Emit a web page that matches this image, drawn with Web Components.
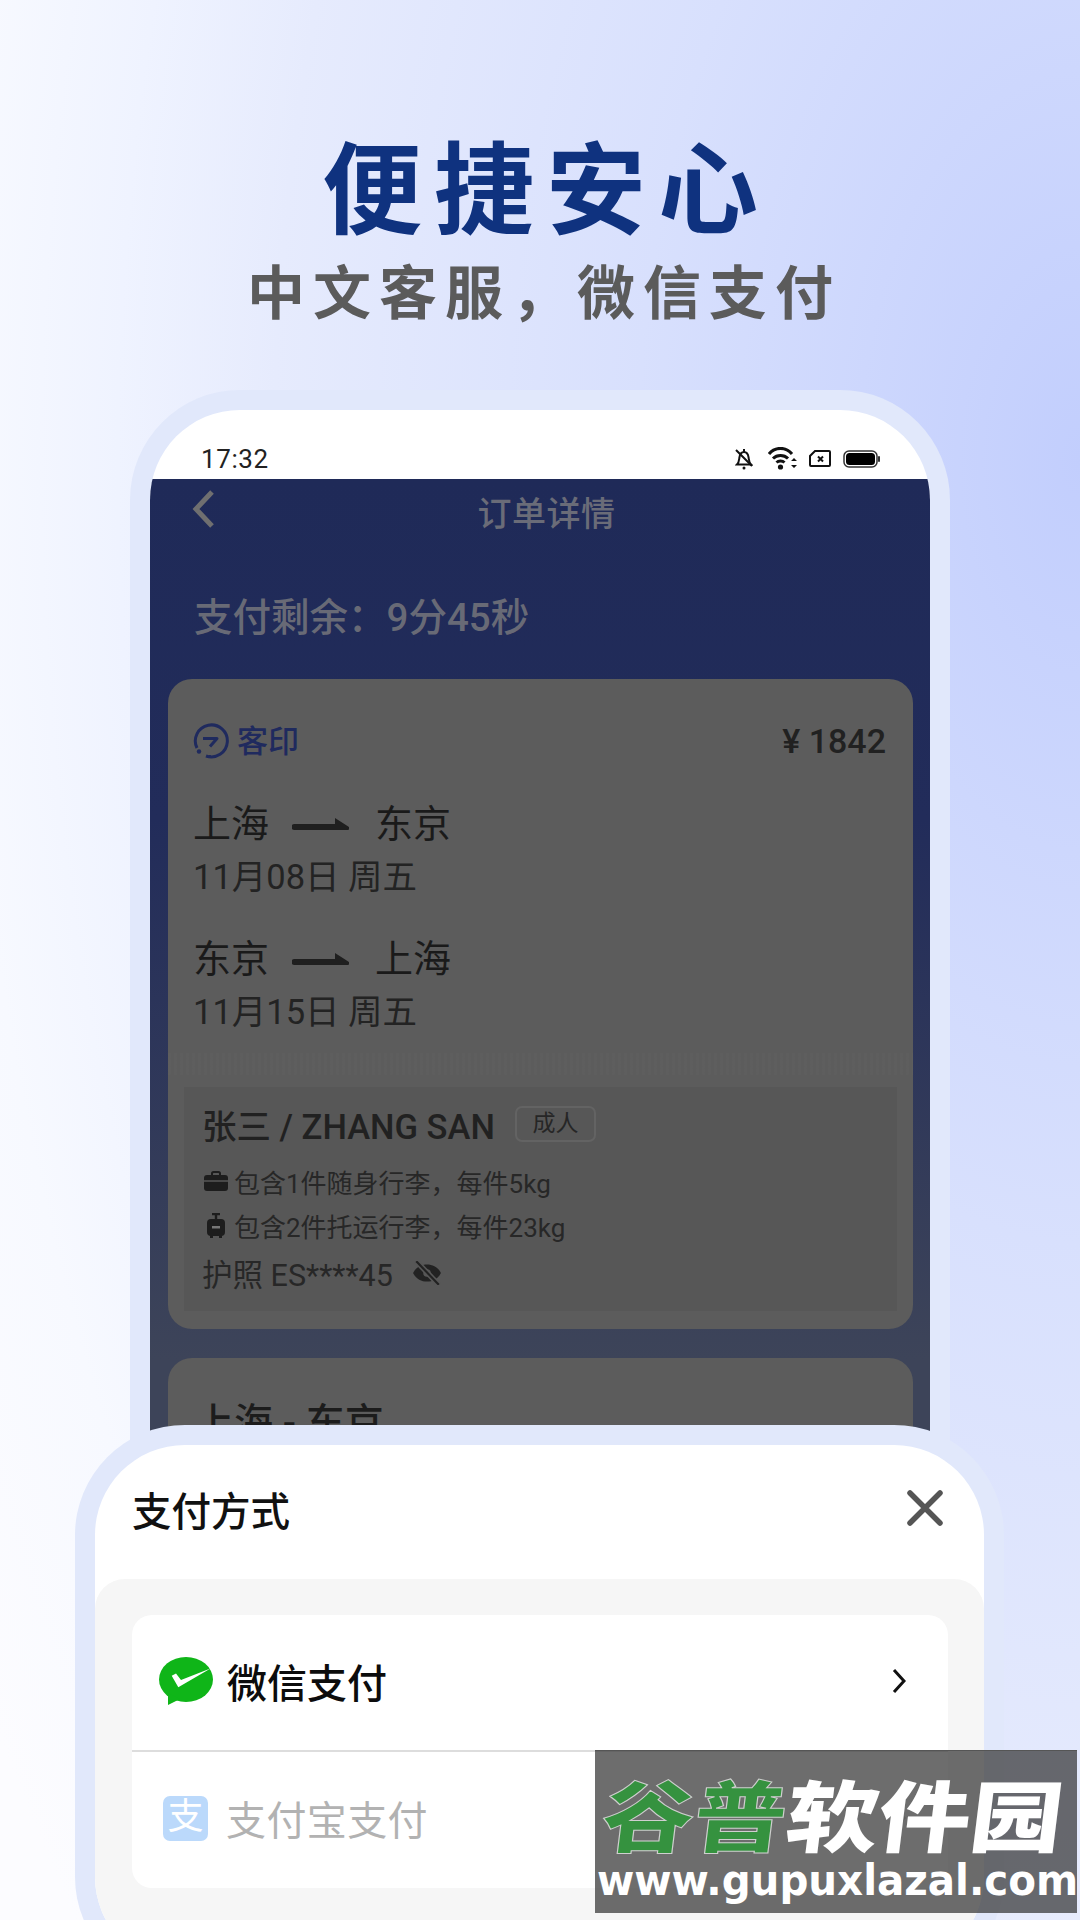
<!DOCTYPE html>
<html lang="zh-CN">
<head>
<meta charset="UTF-8">
<title>便捷安心</title>
<style>
  html, body { margin: 0; padding: 0; }
  body {
    position: relative;
    width: 1080px;
    height: 1920px;
    overflow: hidden;
    font-family: Roboto, "Noto Sans CJK SC", sans-serif;
    background:
      radial-gradient(1300px 2300px at 100% 24%, #c2cefd 0, #d8e0fd 34%, #e6ebfd 62%, #eff3ff 74%, #f7f9ff 86%, #fcfcff 100%);
  }
</style>
</head>
<body>
  <promo-heading>
    <span slot="title">便捷安心</span>
    <span slot="sub">中文客服，微信支付</span>
  </promo-heading>

  <phone-frame>
    <status-bar time="17:32"></status-bar>
    <order-page>
      <order-header>订单详情</order-header>
      <count-down>支付剩余：9分45秒</count-down>

      <order-card>
        <brand-row price="¥ 1842">客印</brand-row>
        <route-row from="上海" to="东京" date="11月08日 周五"></route-row>
        <route-row from="东京" to="上海" date="11月15日 周五" class="second"></route-row>
        <passenger-box>
          <span slot="name">张三 / ZHANG SAN</span>
          <span slot="tag">成人</span>
          <bag-line kind="bag">包含1件随身行李，每件5kg</bag-line>
          <bag-line kind="case">包含2件托运行李，每件23kg</bag-line>
          <span slot="passport">护照 ES****45</span>
        </passenger-box>
      </order-card>

      <next-card>上海 - 东京</next-card>
    </order-page>
  </phone-frame>

  <pay-sheet>
    <pay-row kind="wechat">微信支付</pay-row>
    <pay-row kind="alipay" disabled>支付宝支付</pay-row>
  </pay-sheet>

  <water-mark></water-mark>

<script>
  // 小工具：定义一个只有 shadow DOM 的元素
  function shadow(el, html) {
    el.attachShadow({ mode: 'open' }).innerHTML = html;
  }

  class PromoHeading extends HTMLElement {
    constructor() {
      super();
      shadow(this, `
        <style>
          :host { display: flex; flex-direction: column; align-items: center; box-sizing: border-box; padding-top: 120px; height: 390px; }
          .t { font: 700 100px/126px "Noto Sans CJK SC", sans-serif; letter-spacing: 12px; color: #0f327f; margin-right: -12px; }
          .s { font: 700 58px/76px "Noto Sans CJK SC", sans-serif; letter-spacing: 8px; color: #5b5b5b; margin-top: 5px; margin-right: -8px; }
        </style>
        <div class="t"><slot name="title"></slot></div>
        <div class="s"><slot name="sub"></slot></div>`);
    }
  }

  class PhoneFrame extends HTMLElement {
    constructor() {
      super();
      shadow(this, `
        <style>
          :host { display: block; box-sizing: border-box; width: 820px; height: 1100px; margin-left: 130px; padding: 20px 20px 0; background: #e1e8fb; border-radius: 110px 110px 0 0; }
          .in { height: 100%; background: #fff; border-radius: 90px 90px 0 0; overflow: hidden; }
        </style>
        <div class="in"><slot></slot></div>`);
    }
  }

  class StatusBar extends HTMLElement {
    constructor() {
      super();
      shadow(this, `
        <style>
          :host { display: flex; align-items: center; height: 69px; box-sizing: border-box; padding: 28px 50px 0 51px; color: #222; }
          .time { font: 400 26px/30px Roboto, sans-serif; letter-spacing: .6px; flex: 1; }
          svg { display: block; margin-left: 13px; }
        </style>
        <span class="time">${this.getAttribute('time')}</span>
        <svg width="18" height="22" viewBox="0 0 18 22" fill="none" stroke="#111" stroke-width="2">
          <path d="M2 16.500c2-2 2-4 2.400-7C5 5.500 7 4 9 4s4 1.500 4.600 5.500c.4 3 .4 5 2.400 7z"/>
          <path d="M9 1v3M1 2l16 16"/><circle cx="9" cy="20" r="1.500" fill="#111" stroke="none"/>
        </svg>
        <svg style="margin-left:15px" width="30" height="23" viewBox="0 0 30 23" fill="none" stroke="#111" stroke-width="3">
          <path d="M1 7C7-.5 18-.5 24 7M5 11.500c4-4 11-4 15 0M8.500 15.500c2-2 6-2 8 0"/>
          <circle cx="12.500" cy="20" r="2.600" fill="#111" stroke="none"/>
          <path d="M26 11l3 3h-6zM26 21l3-3h-6z" fill="#111" stroke="none"/>
        </svg>
        <svg style="margin-left:11px" width="22" height="17" viewBox="0 0 22 17" fill="none" stroke="#111" stroke-width="2">
          <path d="M6 1h14a1 1 0 0 1 1 1v13a1 1 0 0 1-1 1H2a1 1 0 0 1-1-1V6z"/>
          <path d="M9 6.500l5 5M14 6.500l-5 5" stroke-width="2"/>
        </svg>
        <svg style="margin-left:12px" width="37" height="18" viewBox="0 0 37 18">
          <rect x="1" y="1" width="33" height="16" rx="5" fill="none" stroke="#333" stroke-width="1.500"/>
          <rect x="3" y="3" width="29" height="12" rx="3.500" fill="#000"/>
          <rect x="35" y="6" width="2" height="6" rx="1" fill="#333"/>
        </svg>`);
    }
  }

  class OrderPage extends HTMLElement {
    constructor() {
      super();
      shadow(this, `
        <style>
          :host { display: block; height: 1100px; box-sizing: border-box; padding: 0 17px 0 18px; background: linear-gradient(#1f2a58 0, #222c5a 340px, #3d4459 880px); }
        </style>
        <slot></slot>`);
    }
  }

  class OrderHeader extends HTMLElement {
    constructor() {
      super();
      shadow(this, `
        <style>
          :host { display: grid; grid-template-columns: 1fr auto 1fr; align-items: center; height: 66px; padding-left: 12px; color: #6a6c78; font-size: 34px; font-weight: 500; }
          svg { display: block; margin-left: 12px; margin-top: -6px; }
          .t { margin-top: -1px; letter-spacing: .5px; }
        </style>
        <svg width="24" height="38" viewBox="0 0 24 38" fill="none" stroke="#6f6f70" stroke-width="5"><path d="M20 2L4 19l16 17"/></svg>
        <div class="t"><slot></slot></div>
        <div></div>`);
    }
  }

  class CountDown extends HTMLElement {
    constructor() {
      super();
      shadow(this, `
        <style>
          :host { display: block; margin: 48px 0 36px; padding-left: 26px; font-size: 38.500px; line-height: 50px; font-weight: 500; color: #686a76; }
        </style>
        <slot></slot>`);
    }
  }

  class OrderCard extends HTMLElement {
    constructor() {
      super();
      shadow(this, `
        <style>
          :host { display: block; box-sizing: border-box; height: 650px; padding: 40px 16px 17px; background: #5c5c5c; border-radius: 24px; color: #222; }
          ::slotted(.second) { margin-top: 32px; }
        </style>
        <slot></slot>`);
    }
  }

  class BrandRow extends HTMLElement {
    constructor() {
      super();
      shadow(this, `
        <style>
          :host { display: flex; align-items: center; height: 44px; padding: 0 11px 0 9px; }
          svg { display: block; margin-right: 8px; }
          .b { flex: 1; margin-top: -4px; font: 500 31px/44px "Noto Sans CJK SC", sans-serif; color: #1f2a5e; }
          .p { font-size: 34px; font-weight: 500; color: #212121; }
        </style>
        <svg width="36" height="36" viewBox="0 0 36 36" fill="none" stroke="#1f2a5e" stroke-width="3">
          <path d="M4 25A16 16 0 1 1 13 33M16 33.500l2 .2"/>
          <circle cx="6" cy="28.500" r="2.200" fill="#1f2a5e" stroke="none"/>
          <path d="M10 15.500h14l-7 8" stroke-linejoin="round"/>
        </svg>
        <div class="b"><slot></slot></div>
        <div class="p">${this.getAttribute('price')}</div>`);
    }
  }

  class RouteRow extends HTMLElement {
    constructor() {
      super();
      shadow(this, `
        <style>
          :host { display: block; margin-top: 33px; padding-left: 9px; }
          .r { display: flex; align-items: center; height: 48px; font-size: 38px; color: #1a1a1a; }
          svg { display: block; margin: 7px 26px 0 23px; }
          .d { margin-top: 11px; height: 44px; font-size: 34.500px; line-height: 44px; font-weight: 400; color: #232323; }
        </style>
        <div class="r"><span>${this.getAttribute('from')}</span>
          <svg width="57" height="14" viewBox="0 0 57 14"><path d="M2.500 7H43V1l14 9v1.500c0 1-.5 1.500-1.500 1.500h-53a3 3 0 0 1 0-6z" fill="#1f1f1f"/></svg>
          <span>${this.getAttribute('to')}</span></div>
        <div class="d">${this.getAttribute('date')}</div>`);
    }
  }

  class PassengerBox extends HTMLElement {
    constructor() {
      super();
      shadow(this, `
        <style>
          :host { display: block; box-sizing: border-box; height: 224px; margin-top: 53px; padding: 17px 18px 18px; background: #575757; position: relative; }
          :host::before { content: ""; position: absolute; left: -16px; right: -16px; top: -34px; height: 22px; background: repeating-linear-gradient(90deg, rgba(255,255,255,.012) 0 3px, transparent 3px 6px); }
          .n { display: flex; align-items: center; height: 40px; margin-bottom: 17px; font-size: 34.500px; font-weight: 500; color: #212121; }
          .tag { box-sizing: border-box; width: 81px; height: 36px; margin-left: 20px; border: 2px solid #636363; border-radius: 7px; font-size: 23px; line-height: 32px; text-align: center; font-weight: 400; color: #262626; }
          .pp { display: flex; align-items: center; height: 40px; margin-top: 8px; font-size: 30.500px; color: #272727; }
          svg { display: block; margin-left: 19px; }
        </style>
        <div class="n"><slot name="name"></slot><span class="tag"><slot name="tag"></slot></span></div>
        <slot></slot>
        <div class="pp"><slot name="passport"></slot>
          <svg width="30" height="24" viewBox="0 0 28 22">
            <path d="M1 11C4 5 9 3 14 3s10 2 13 8c-3 6-8 8-13 8S4 17 1 11z" fill="#222"/>
            <circle cx="14" cy="11" r="3.500" fill="#575757"/>
            <path d="M4 0l21 22" stroke="#575757" stroke-width="5"/><path d="M4 0l21 22" stroke="#222" stroke-width="2"/>
          </svg></div>`);
    }
  }

  class BagLine extends HTMLElement {
    constructor() {
      super();
      const bag = `<svg width="24" height="20" viewBox="0 0 24 20"><path d="M8 4V2.500A1.500 1.500 0 0 1 9.500 1h5A1.500 1.500 0 0 1 16 2.500V4" fill="none" stroke="#1d1d1d" stroke-width="2"/><rect y="4" width="24" height="16" rx="3" fill="#1d1d1d"/><path d="M0 10h24" stroke="#575757" stroke-width="1.500"/></svg>`;
      const box = `<svg style="margin-left:3px;margin-right:3px" width="18" height="25" viewBox="0 0 18 25"><path d="M5 1h8M9 1v6" stroke="#1d1d1d" stroke-width="2.400" fill="none"/><rect y="6" width="18" height="17" rx="4" fill="#1d1d1d"/><rect x="3" y="22" width="3" height="3" fill="#1d1d1d"/><rect x="12" y="22" width="3" height="3" fill="#1d1d1d"/><rect x="5" y="13" width="8" height="2.500" fill="#777"/></svg>`;
      shadow(this, `
        <style>
          :host { display: flex; align-items: center; height: 40px; margin-bottom: 4px; padding-left: 2px; font-size: 26px; color: #272727; }
          svg { display: block; flex: none; }
          span { margin-left: 6px; }
        </style>
        ${this.getAttribute('kind') === 'bag' ? bag : box}<span><slot></slot></span>`);
    }
  }

  class NextCard extends HTMLElement {
    constructor() {
      super();
      shadow(this, `
        <style>
          :host { display: block; height: 200px; margin-top: 29px; box-sizing: border-box; padding: 41px 0 0 27px; background: #5c5c5c; border-radius: 24px; font-size: 39px; line-height: 48px; font-weight: 500; color: #1c1c1c; }
        </style>
        <slot></slot>`);
    }
  }

  // 底部弹层，盖在手机画面上面
  class PaySheet extends HTMLElement {
    constructor() {
      super();
      shadow(this, `
        <style>
          :host { position: absolute; left: 75px; top: 1425px; box-sizing: border-box; width: 929px; height: 562px; padding: 20px; background: #e1e8fb; border-radius: 110px; }
          .in { height: 100%; background: #fff; border-radius: 90px; overflow: hidden; }
          .head { display: flex; align-items: center; height: 134px; padding: 0 41px 8px 37px; box-sizing: border-box; }
          .title { flex: 1; font-size: 39.500px; font-weight: 500; color: #111; }
          svg { display: block; }
          .panel { height: 100%; box-sizing: border-box; padding: 36px 36px 0 37px; background: #f6f6f6; border-radius: 30px 30px 0 0; }
          .list { background: #fff; border-radius: 20px; }
        </style>
        <div class="in">
          <div class="head"><div class="title">支付方式</div>
            <svg width="36" height="36" viewBox="0 0 36 36" stroke="#555" stroke-width="5.500" stroke-linecap="round"><path d="M3 3l30 30M33 3L3 33"/></svg>
          </div>
          <div class="panel"><div class="list"><slot></slot></div></div>
        </div>`);
    }
  }

  class PayRow extends HTMLElement {
    constructor() {
      super();
      const wechat = `<svg width="54" height="48" viewBox="0 0 54 48"><ellipse cx="27" cy="22.500" rx="27" ry="22.500" fill="#0fb518"/><path d="M9 36v12l12-6z" fill="#0fb518"/><path d="M12.700 18.700L17 16.500l5 6.500 30-11.700-32.700 19z" fill="#fff"/></svg>`;
      const alipay = `<span class="ali">支</span>`;
      const off = this.hasAttribute('disabled');
      shadow(this, `
        <style>
          :host { display: flex; align-items: center; box-sizing: border-box; height: 137px; padding: 0 42px 4px 27px; font-size: 40px; font-weight: 500; color: #0c0c0c; border-bottom: 2px solid #ddd; }
          :host([disabled]) { height: 136px; padding-left: 31px; font-weight: 400; color: #b2b2b2; border-bottom: 0; }
          svg { display: block; }
          .ali { display: block; width: 45px; height: 45px; border-radius: 7px; background: #bbd9fb; color: #fff; font-size: 36px; line-height: 43px; text-align: center; }
          .t { flex: 1; margin-left: 14px; }
          :host([disabled]) .t { margin-left: 18px; letter-spacing: .4px; }
        </style>
        ${off ? alipay : wechat}<div class="t"><slot></slot></div>
        <svg width="14" height="26" viewBox="0 0 14 26" fill="none" stroke="${off ? '#ccc' : '#111'}" stroke-width="3"><path d="M2 2l10 11L2 24"/></svg>`);
    }
  }

  class WaterMark extends HTMLElement {
    constructor() {
      super();
      shadow(this, `
        <style>
          :host { position: absolute; left: 595px; top: 1750px; width: 482px; height: 163px; box-sizing: border-box; padding-top: 18px; background: rgba(52,52,52,.72); border-top: 1px solid #555; overflow: hidden; }
          .logo { display: flex; height: 86px; padding-left: 7px; font: 900 78px/86px "Noto Sans CJK SC", sans-serif; color: #fff; transform-origin: 0 50%; transform: scaleX(1.18) skewX(-6deg); white-space: nowrap; }
          .logo b { font-weight: 900; color: #35923f; -webkit-text-stroke: 1px #cfcfcf; }
          .url { margin-top: 1px; padding-left: 2px; font: 700 43px/48px "DejaVu Sans", sans-serif; color: #fff; white-space: nowrap; transform-origin: 0 50%; transform: scaleX(.94); }
        </style>
        <div class="logo"><b>谷普</b>软件园</div>
        <div class="url">www.gupuxlazal.com</div>`);
    }
  }

  customElements.define('promo-heading', PromoHeading);
  customElements.define('phone-frame', PhoneFrame);
  customElements.define('status-bar', StatusBar);
  customElements.define('order-page', OrderPage);
  customElements.define('order-header', OrderHeader);
  customElements.define('count-down', CountDown);
  customElements.define('order-card', OrderCard);
  customElements.define('brand-row', BrandRow);
  customElements.define('route-row', RouteRow);
  customElements.define('passenger-box', PassengerBox);
  customElements.define('bag-line', BagLine);
  customElements.define('next-card', NextCard);
  customElements.define('pay-sheet', PaySheet);
  customElements.define('pay-row', PayRow);
  customElements.define('water-mark', WaterMark);
</script>
</body>
</html>
